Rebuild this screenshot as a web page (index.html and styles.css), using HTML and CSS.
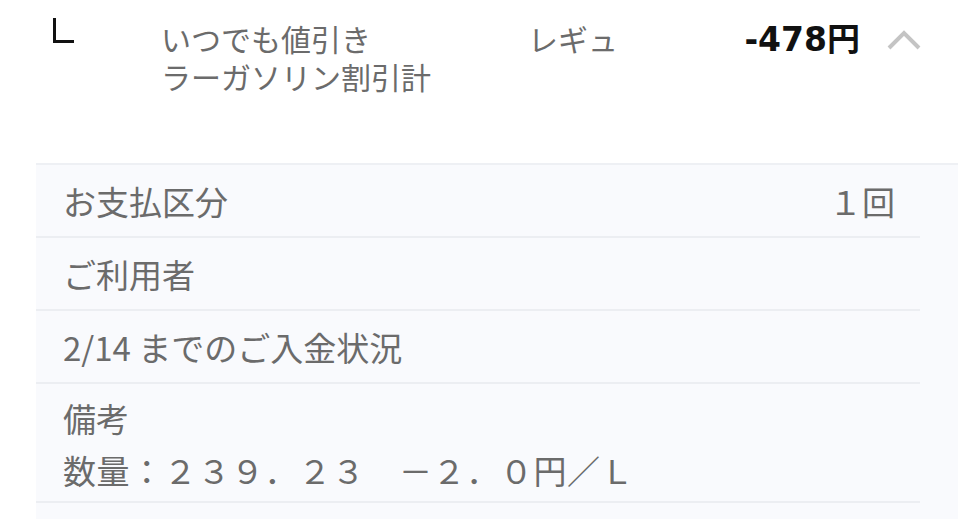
FILE: index.html
```html
<!DOCTYPE html>
<html lang="ja">
<head>
<meta charset="utf-8">
<title>明細</title>
<link rel="stylesheet" href="styles.css">
</head>
<body>
<div class="item">
  <span class="mark"></span>
  <div class="name"><div class="line">いつでも値引き</div><div class="line">ラーガソリン割引計</div></div>
  <div class="grade">レギュ</div>
  <div class="price">-478円</div>
  <svg class="chev" width="34" height="20" viewBox="0 0 34 20"><polyline points="2,18 17,3 32,18" fill="none" stroke="#c4c4c4" stroke-width="4"/></svg>
</div>
<div class="panel">
  <div class="row"><span>お支払区分</span><span>１回</span></div>
  <div class="row"><span>ご利用者</span></div>
  <div class="row"><span>2/14 までのご入金状況</span></div>
  <div class="row note">
    <div>備考</div>
    <div class="note-val">数量：２３９．２３　－２．０円／Ｌ</div>
  </div>
</div>
</body>
</html>
```
FILE: styles.css
```css
html, body {
  margin: 0;
  padding: 0;
  background: #ffffff;
}
body {
  width: 958px;
  height: 519px;
  overflow: hidden;
  font-family: "Noto Sans CJK JP", "Noto Sans", sans-serif;
  color: #6b6b6b;
}
.item {
  display: flex;
  align-items: flex-start;
  height: 163px;
  box-sizing: border-box;
  padding-top: 19px;
  padding-right: 37px;
}
.mark {
  display: block;
  width: 18px;
  height: 22px;
  margin-left: 53px;
  margin-top: -1px;
  border-left: 3px solid #111;
  border-bottom: 3px solid #111;
}
.name {
  margin-left: 87px;
  width: 367px;
  font-size: 30px;
}
.line {
  height: 38px;
  line-height: 38px;
}
.grade {
  font-size: 30px;
  line-height: 38px;
}
.price {
  margin-left: auto;
  font-family: "DejaVu Sans", "Noto Sans CJK JP", sans-serif;
  font-weight: bold;
  font-size: 33px;
  line-height: 44px;
  margin-top: -1px;
  color: #111;
}
.chev {
  margin-left: 27px;
  margin-top: 11px;
}
.panel {
  margin-left: 36px;
  height: 356px;
  box-sizing: border-box;
  background: #f9fafd;
  border-top: 2px solid #eef0f4;
}
.row {
  display: flex;
  align-items: center;
  justify-content: space-between;
  height: 73px;
  box-sizing: border-box;
  margin-right: 38px;
  padding: 0 25px 0 27px;
  border-bottom: 2px solid #eceef2;
  font-size: 33px;
  line-height: 40px;
}
.row.note {
  display: block;
  height: 119px;
  padding-top: 14px;
}
.note-val {
  margin-top: 12px;
  letter-spacing: 0.6px;
}
```
